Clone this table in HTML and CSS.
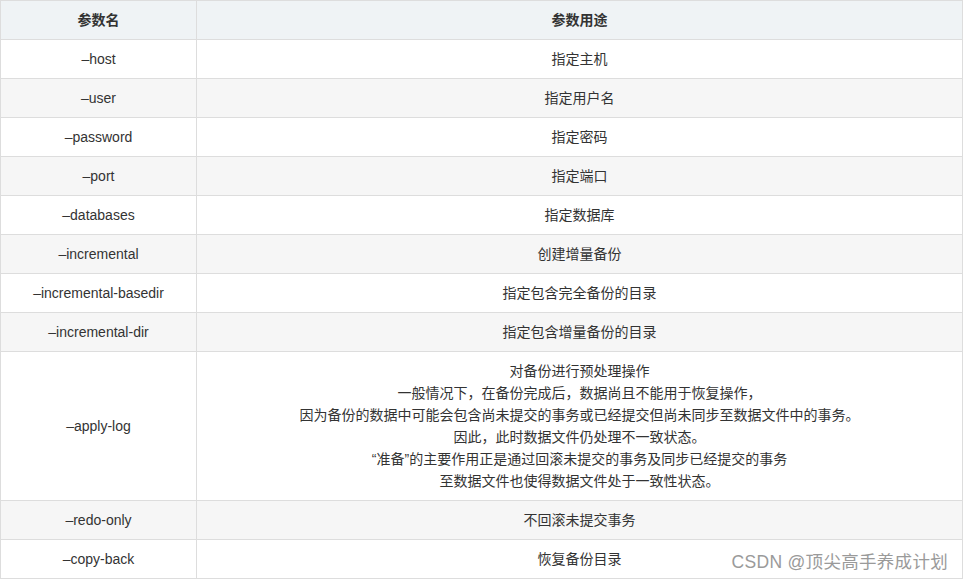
FILE: index.html
```html
<!DOCTYPE html>
<html lang="zh-CN">
<head>
<meta charset="utf-8">
<title>参数</title>
<link rel="stylesheet" href="styles.css">
</head>
<body>
<div class="wrap">
<table class="params">
  <thead>
    <tr><th class="c1">参数名</th><th>参数用途</th></tr>
  </thead>
  <tbody>
    <tr><td>–host</td><td>指定主机</td></tr>
    <tr><td>–user</td><td>指定用户名</td></tr>
    <tr><td>–password</td><td>指定密码</td></tr>
    <tr><td>–port</td><td>指定端口</td></tr>
    <tr><td>–databases</td><td>指定数据库</td></tr>
    <tr><td>–incremental</td><td>创建增量备份</td></tr>
    <tr><td>–incremental-basedir</td><td>指定包含完全备份的目录</td></tr>
    <tr><td>–incremental-dir</td><td>指定包含增量备份的目录</td></tr>
    <tr><td>–apply-log</td><td>对备份进行预处理操作<br>一般情况下，在备份完成后，数据尚且不能用于恢复操作，<br>因为备份的数据中可能会包含尚未提交的事务或已经提交但尚未同步至数据文件中的事务。<br>因此，此时数据文件仍处理不一致状态。<br>“准备”的主要作用正是通过回滚未提交的事务及同步已经提交的事务<br>至数据文件也使得数据文件处于一致性状态。</td></tr>
    <tr><td>–redo-only</td><td>不回滚未提交事务</td></tr>
    <tr><td>–copy-back</td><td>恢复备份目录</td></tr>
  </tbody>
</table>
<div class="mark">CSDN @顶尖高手养成计划</div>
</div>
</body>
</html>
```
FILE: styles.css
```css
html, body {
  margin: 0;
  padding: 0;
  background: #fff;
}
.wrap {
  position: relative;
  width: 963px;
}
.params {
  width: 963px;
  border-collapse: collapse;
  font-family: "Liberation Sans", "Noto Sans CJK SC", sans-serif;
  font-size: 14px;
  line-height: 22px;
  color: #333;
  table-layout: fixed;
}
.params th, .params td {
  border: 1px solid #dddddd;
  padding: 8px 8px;
  text-align: center;
  vertical-align: middle;
}
.params th {
  background: #eff3f5;
  font-weight: bold;
}
.params th.c1 {
  width: 179px;
}
.params tbody tr:nth-child(even) td {
  background: #f6f6f6;
}
.mark {
  position: absolute;
  right: 15px;
  bottom: 6px;
  font-family: "Liberation Sans", "Noto Sans CJK SC", sans-serif;
  font-size: 17.5px;
  color: #9a9a9a;
  text-shadow: 0 0 1px #fff;
  letter-spacing: 0.3px;
}
```
